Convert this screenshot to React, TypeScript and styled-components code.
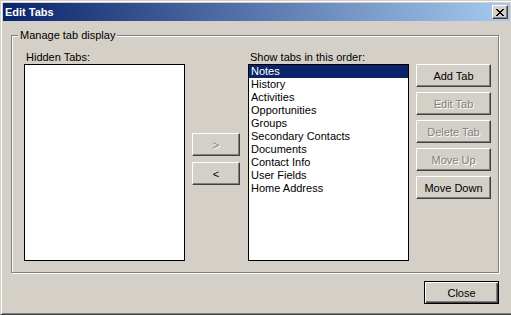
import React from "react";
import styled, { createGlobalStyle, css } from "styled-components";

const Global = createGlobalStyle`
  html, body { margin: 0; padding: 0; background: #D4D0C8; }
  body { font-family: "Liberation Sans", Arial, sans-serif; font-size: 11px; }
  * { box-sizing: border-box; }
`;

const Window = styled.div`
  width: 511px;
  height: 315px;
  background: #d4d0c8;
  border-style: solid;
  border-width: 1px 0 1px 1px;
  border-color: #d4d0c8 transparent #404040 #d4d0c8;
  box-shadow: inset 1px 1px #fff, inset 0 -1px #808080;
  padding: 2px 1px 2px 2px;
  display: flex;
  flex-direction: column;
  color: #000;
`;

const TitleBar = styled.div`
  height: 18px;
  background: linear-gradient(to right, #0a246a, #a6caf0);
  display: flex;
  align-items: center;
  justify-content: space-between;
  padding: 0 2px 0 2px;
`;

const Title = styled.span`
  color: #fff;
  font-weight: bold;
  font-size: 11px;
  line-height: 13px;
  padding-top: 1px;
`;

const CaptionButton = styled.button`
  width: 16px;
  height: 14px;
  padding: 0;
  margin: 0;
  background: #d4d0c8;
  border: 1px solid;
  border-color: #fff #404040 #404040 #fff;
  box-shadow: inset -1px -1px #808080;
  display: flex;
  align-items: center;
  justify-content: center;
`;

const Body = styled.div`
  flex: 1;
  display: flex;
  flex-direction: column;
  padding: 14px 11px 0 8px;
`;

const GroupBox = styled.div`
  position: relative;
  border: 1px solid #808080;
  box-shadow: 1px 1px 0 #fff, inset 1px 1px 0 #fff;
  padding: 15px 0 11px 12px;
`;

const Legend = styled.span`
  position: absolute;
  top: -7px;
  left: 6px;
  padding: 0 2px;
  background: #d4d0c8;
  line-height: 13px;
`;

const Grid = styled.div`
  display: grid;
  grid-template-columns: 161px 49px 161px 75px;
  grid-template-rows: 13px 197px;
  column-gap: 7px;
`;

const Label = styled.div<{ $col: number }>`
  grid-column: ${(p) => p.$col};
  grid-row: 1;
  line-height: 13px;
  padding-left: 2px;
  white-space: nowrap;
`;

const ListBox = styled.ul<{ $col: number }>`
  grid-column: ${(p) => p.$col};
  grid-row: 2;
  list-style: none;
  margin: 0;
  padding: 0;
  background: #fff;
  border: 1px solid #000;
  overflow: hidden;
`;

const ListItem = styled.li<{ $selected?: boolean }>`
  height: 13px;
  line-height: 13px;
  padding-left: 2px;
  white-space: nowrap;
  ${(p) =>
    p.$selected &&
    css`
      background: #0a246a;
      color: #fff;
    `}
`;

const ButtonStack = styled.div<{ $col: number; $top: number; $gap: number }>`
  grid-column: ${(p) => p.$col};
  grid-row: 2;
  display: flex;
  flex-direction: column;
  gap: ${(p) => p.$gap}px;
  padding-top: ${(p) => p.$top}px;
`;

const Button = styled.button<{ $default?: boolean; $w?: number }>`
  width: ${(p) => p.$w ?? 75}px;
  height: 23px;
  padding: 0;
  margin: 0;
  font-family: "Liberation Sans", Arial, sans-serif;
  font-size: 11px;
  color: #000;
  background: #d4d0c8;
  border: 1px solid;
  border-color: #fff #404040 #404040 #fff;
  box-shadow: inset -1px -1px #808080, inset 1px 1px #d4d0c8;
  ${(p) =>
    p.$default &&
    css`
      border-color: #000;
      box-shadow: inset 1px 1px #fff, inset -1px -1px #404040, inset -2px -2px #808080;
    `}
  &:disabled {
    color: #808080;
    text-shadow: 1px 1px 0 #fff;
  }
`;

const Footer = styled.div`
  display: flex;
  justify-content: flex-end;
  margin-top: 8px;
`;

const tabs = [
  "Notes",
  "History",
  "Activities",
  "Opportunities",
  "Groups",
  "Secondary Contacts",
  "Documents",
  "Contact Info",
  "User Fields",
  "Home Address",
];

export default function App() {
  return (
    <>
      <Global />
      <Window>
        <TitleBar>
          <Title>Edit Tabs</Title>
          <CaptionButton aria-label="Close">
            <svg width="8" height="7" viewBox="0 0 8 7" shapeRendering="crispEdges">
              <path
                d="M0 0h2v1h-2zM6 0h2v1h-2zM1 1h2v1h-2zM5 1h2v1h-2zM2 2h4v1h-4zM3 3h2v1h-2zM2 4h4v1h-4zM1 5h2v1h-2zM5 5h2v1h-2zM0 6h2v1h-2zM6 6h2v1h-2z"
                fill="#000"
              />
            </svg>
          </CaptionButton>
        </TitleBar>
        <Body>
          <GroupBox>
            <Legend>Manage tab display</Legend>
            <Grid>
              <Label $col={1}>Hidden Tabs:</Label>
              <Label $col={3}>Show tabs in this order:</Label>
              <ListBox $col={1} />
              <ButtonStack $col={2} $top={69} $gap={6}>
                <Button $w={48} disabled>
                  &gt;
                </Button>
                <Button $w={48}>&lt;</Button>
              </ButtonStack>
              <ListBox $col={3}>
                {tabs.map((t, i) => (
                  <ListItem key={t} $selected={i === 0}>
                    {t}
                  </ListItem>
                ))}
              </ListBox>
              <ButtonStack $col={4} $top={0} $gap={5}>
                <Button>Add Tab</Button>
                <Button disabled>Edit Tab</Button>
                <Button disabled>Delete Tab</Button>
                <Button disabled>Move Up</Button>
                <Button>Move Down</Button>
              </ButtonStack>
            </Grid>
          </GroupBox>
          <Footer>
            <Button $default>Close</Button>
          </Footer>
        </Body>
      </Window>
    </>
  );
}
